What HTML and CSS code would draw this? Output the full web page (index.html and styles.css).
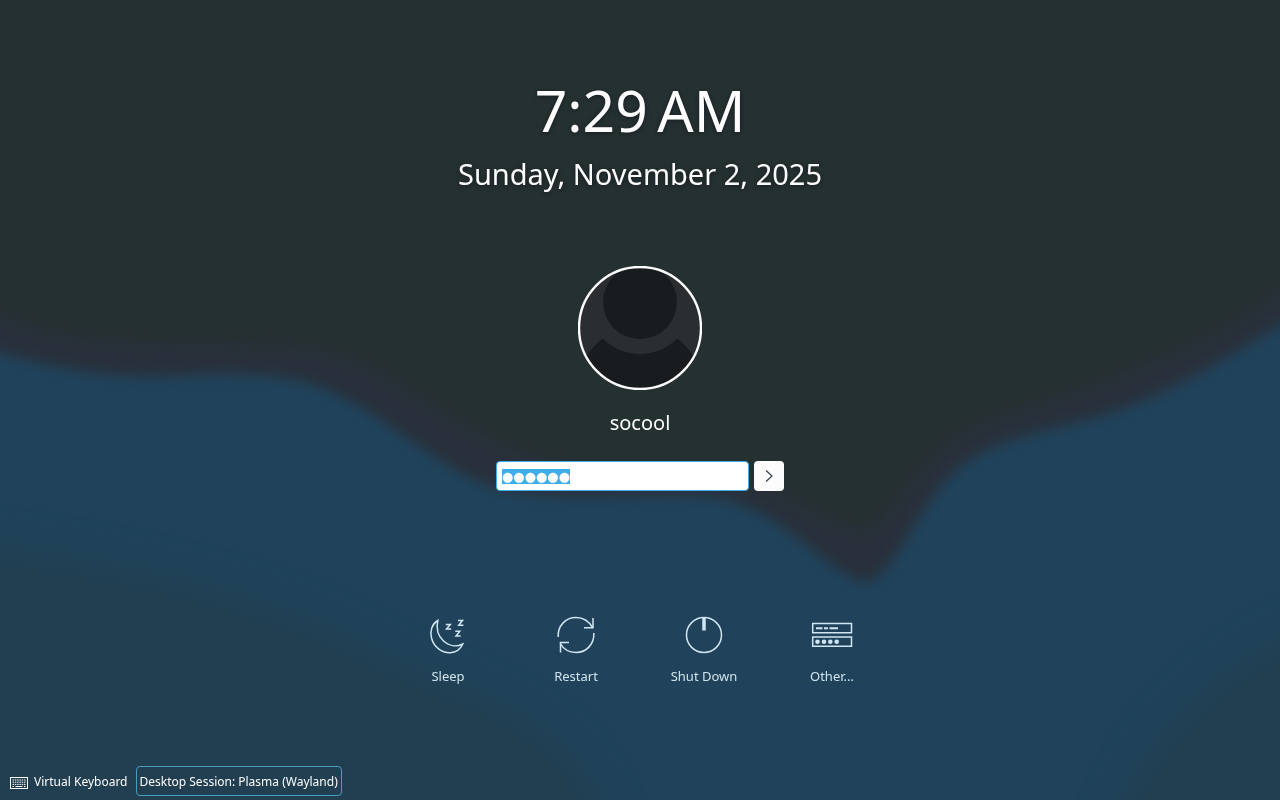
FILE: index.html
```
<!DOCTYPE html>
<html lang="en">
<head>
    <meta charset="UTF-8">
    <meta name="viewport" content="width=device-width, initial-scale=1.0">
    <title>Login</title>
    <link rel="stylesheet" href="styles.css">
</head>
<body>
    <svg class="wallpaper" viewBox="0 0 1280 800" preserveAspectRatio="none" aria-hidden="true">
        <defs>
            <filter id="soft" x="-10%" y="-10%" width="120%" height="120%" color-interpolation-filters="sRGB">
                <feGaussianBlur stdDeviation="7"/>
            </filter>
            <filter id="softer" x="-20%" y="-20%" width="140%" height="140%" color-interpolation-filters="sRGB">
                <feGaussianBlur stdDeviation="18"/>
            </filter>
        </defs>
        <rect width="1280" height="800" fill="#253030"/>
        <path filter="url(#soft)" fill="#29303b" d="M-60 300 L0 314 C60 338 130 343 200 342 C290 342 330 344 375 368 C430 400 470 430 520 450 C600 478 700 468 770 488 C810 504 840 528 864 528 C890 519 905 474 950 438 C1000 405 1070 396 1120 373 C1180 347 1230 330 1280 287 L1340 246 V900 H-60 Z"/>
        <path filter="url(#soft)" fill="#20435b" d="M-60 340 L0 352 C60 370 110 378 170 376 C240 372 290 373 330 391 C390 418 430 462 490 486 C560 506 650 490 720 498 C790 515 830 576 866 582 C900 570 915 505 960 467 C1000 434 1060 430 1110 413 C1170 393 1220 362 1280 325 L1340 285 V900 H-60 Z"/>
        <path filter="url(#softer)" fill="#213f50" d="M-60 540 C100 560 260 590 370 650 C470 700 590 710 620 860 H-60 Z"/>
        <path filter="url(#softer)" fill="#213f50" d="M1340 620 C1240 650 1150 710 1100 860 H1340 Z"/>
    </svg>

    <main class="greeter">
        <header class="clock">
            <time class="clock-time">7:29&#8239;AM</time>
            <time class="clock-date" datetime="2025-11-02">Sunday, November 2, 2025</time>
        </header>

        <section class="user">
            <svg class="avatar" viewBox="0 0 124 124" aria-hidden="true">
                <defs>
                    <clipPath id="face"><circle cx="62" cy="62" r="61"/></clipPath>
                </defs>
                <g clip-path="url(#face)">
                    <rect width="124" height="124" fill="#2a2e31"/>
                    <circle cx="62" cy="122" r="62" fill="#181c1f"/>
                    <circle cx="62" cy="36" r="52" fill="#2a2e31"/>
                    <circle cx="62" cy="36" r="37" fill="#181c1f"/>
                </g>
                <circle cx="62" cy="62" r="61" fill="none" stroke="#fcfcfc" stroke-width="2.4"/>
            </svg>
            <label class="user-name" for="password">socool</label>
            <form class="login" onsubmit="return false">
                <input class="password" id="password" type="text" value="●●●●●●" autocomplete="off" spellcheck="false">
                <button class="login-button" type="submit" aria-label="Log In">
                    <svg width="16" height="16" viewBox="0 0 16 16" fill="none" stroke="#3b4045" stroke-width="1.2"><path d="M5 2.500 L11 8 L5 13.500"/></svg>
                </button>
            </form>
        </section>

        <nav class="actions">
            <button class="action" type="button">
                <svg class="action-icon" viewBox="0 0 48 48">
                    <path d="M13.800 9.500 C7.800 13 5.800 20 7.500 27 C9.800 36 17.800 42 26.300 41.700 C31.800 41.400 36.300 38.500 38.800 33 C32.300 36.200 24.800 35 19.300 29.800 C13.800 24.500 12.100 17 13.800 9.500 Z"/>
                    <path d="M21.800 13.500 H26.300 L22.500 18 H27.200 M34 9.500 H38.500 L34.700 14.300 H39.400 M31.300 20.200 H35.800 L32 25 H36.700"/>
                </svg>
                Sleep
            </button>
            <button class="action" type="button">
                <svg class="action-icon" viewBox="0 0 48 48">
                    <path d="M6.200 26 C5.500 15 13.500 6.500 24 6.500 C31 6.500 37 10.500 40.500 16.500 M41 7 V16.800 H32"/>
                    <path d="M41.800 22 C42.500 33 34.500 41.500 24 41.500 C17 41.500 11 37.500 8 32 M8.500 41.500 V31.500 H17"/>
                </svg>
                Restart
            </button>
            <button class="action" type="button">
                <svg class="action-icon" viewBox="0 0 48 48">
                    <circle cx="24" cy="24" r="17.500"/>
                    <path stroke-width="3.500" d="M24 6 V19.500"/>
                </svg>
                Shut Down
            </button>
            <button class="action" type="button">
                <svg class="action-icon" viewBox="0 0 48 48">
                    <path d="M4.700 12.500 H43.500 V21.700 H4.700 Z M4.700 26 H43.500 V35.200 H4.700 Z"/>
                    <path stroke-width="2" d="M8 17.200 H14.500 M16 17.200 H20 M21.500 17.200 H30"/>
                    <g fill="#cfe6f2" stroke="none">
                        <circle cx="9.500" cy="30.800" r="2.300"/>
                        <circle cx="16" cy="30.800" r="2.300"/>
                        <circle cx="22.300" cy="30.800" r="2.300"/>
                        <circle cx="28.700" cy="30.800" r="2.300"/>
                    </g>
                </svg>
                Other...
            </button>
        </nav>
    </main>

    <footer class="footer">
        <button class="footer-button" type="button">
            <svg class="keyboard-icon" viewBox="0 0 18 12" fill="none" stroke="#fcfcfc">
                <rect x="0.500" y="0.500" width="17" height="11"/>
                <path stroke-dasharray="1.500 0.800" d="M2.500 3 H16 M2.500 5.200 H16 M2.500 7.400 H16"/>
                <path d="M2.500 9.500 H4 M5.500 9.500 H12.500 M14 9.500 H15.500"/>
            </svg>
            Virtual Keyboard
        </button>
        <button class="footer-button session" type="button">Desktop Session: Plasma (Wayland)</button>
    </footer>

    <script>
        const password = document.getElementById('password');
        password.focus();
        password.select();
    </script>
</body>
</html>
```
FILE: styles.css
```
* {
    box-sizing: border-box;
}

body {
    margin: 0;
    min-height: 100vh;
    display: flex;
    flex-direction: column;
    background: #253030;
    color: #fcfcfc;
    font-family: "Noto Sans", sans-serif;
}

button {
    font-family: inherit;
    color: inherit;
    background: none;
    border: none;
    padding: 0;
}

.wallpaper {
    position: fixed;
    inset: 0;
    width: 100%;
    height: 100%;
    z-index: -1;
}

.greeter {
    flex: 1;
    display: flex;
    flex-direction: column;
    align-items: center;
    padding-top: 70px;
}

/* clock */
.clock {
    display: flex;
    flex-direction: column;
    align-items: center;
    gap: 4px;
    text-shadow: 0 1px 4px rgba(20, 24, 32, 0.8);
}

.clock-time {
    font-size: 57px;
    line-height: 80px;
}

.clock-date {
    font-size: 29px;
    line-height: 40px;
}

/* user and password */
.user {
    display: flex;
    flex-direction: column;
    align-items: center;
    margin-top: 72px;
}

.avatar {
    width: 124px;
    height: 124px;
}

.user-name {
    margin-top: 19px;
    font-size: 20px;
    line-height: 28px;
}

.login {
    display: flex;
    gap: 5px;
    margin-top: 24px;
}

.password {
    width: 253px;
    height: 30px;
    padding: 0 5px;
    border: 1px solid #3daee9;
    border-radius: 4px;
    outline: none;
    background: #ffffff;
    color: #232629;
    font-family: "DejaVu Sans", sans-serif;
    font-size: 13px;
    line-height: 18px;
}

.password::selection {
    background: #3daee9;
    color: #ffffff;
}

.login-button {
    width: 30px;
    height: 30px;
    display: flex;
    align-items: center;
    justify-content: center;
    border-radius: 4px;
    background: #fcfcfc;
}

/* sleep, restart, shut down, other */
.actions {
    display: flex;
    margin-top: 120px;
}

.action {
    width: 128px;
    display: flex;
    flex-direction: column;
    align-items: center;
    gap: 7px;
    color: #cfe2ec;
    font-size: 13px;
    line-height: 20px;
}

.action-icon {
    width: 48px;
    height: 48px;
    fill: none;
    stroke: #cfe6f2;
    stroke-width: 1.5;
}

/* bottom bar */
.footer {
    display: flex;
    gap: 4px;
    padding: 4px;
}

.footer-button {
    height: 30px;
    display: flex;
    align-items: center;
    gap: 6px;
    padding: 1px 4px 0 6px;
    font-size: 12px;
    line-height: 18px;
}

.keyboard-icon {
    width: 18px;
    height: 12px;
    margin-top: 3px;
}

.session {
    padding: 1px 3px 0;
    border: 1px solid #4a9cc0;
    border-radius: 4px;
}
```
